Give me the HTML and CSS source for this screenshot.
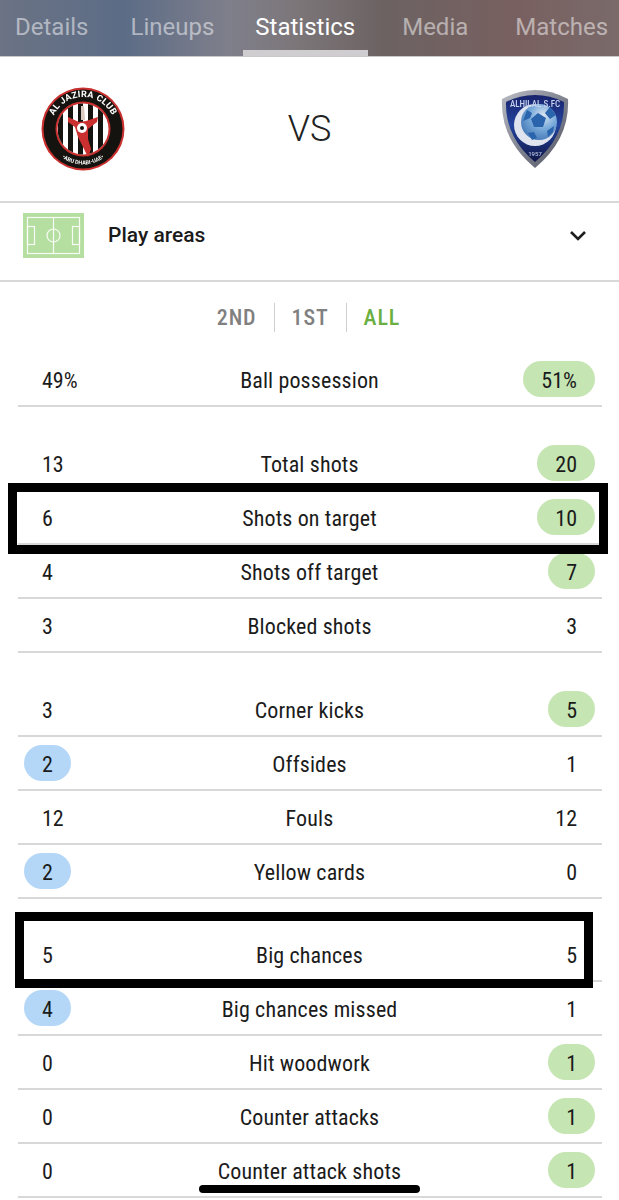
FILE: index.html
```html
<!DOCTYPE html>
<html lang="en">
<head>
<meta charset="utf-8">
<title>Statistics</title>
<link rel="stylesheet" href="styles.css">
</head>
<body>
<div class="page">
  <nav class="tabs">
    <a class="tab tab-details">Details</a>
    <a class="tab tab-lineups">Lineups</a>
    <a class="tab tab-stats active">Statistics</a>
    <a class="tab tab-media">Media</a>
    <a class="tab tab-matches">Matches</a>
  </nav>

  <section class="versus">
    <svg class="crest crest-home" width="84" height="84" viewBox="0 0 84 84">
      <defs>
        <path id="arcTop" d="M10 42a32 32 0 0 1 64 0"/>
        <path id="arcBottom" d="M6.500 42a35.500 35.500 0 0 0 71 0"/>
        <clipPath id="innerClip"><circle cx="42" cy="42" r="25.500"/></clipPath>
      </defs>
      <circle cx="42" cy="42" r="41.500" fill="#c9302f"/>
      <circle cx="42" cy="42" r="39.500" fill="#15130f"/>
      <circle cx="42" cy="42" r="27.500" fill="#c9302f"/>
      <circle cx="42" cy="42" r="25.500" fill="#fff"/>
      <g clip-path="url(#innerClip)" fill="#15130f">
        <rect x="17" y="14" width="5" height="56"/>
        <rect x="27" y="14" width="5" height="56"/>
        <rect x="37" y="14" width="5" height="56"/>
        <rect x="47" y="14" width="5" height="56"/>
        <rect x="57" y="14" width="5" height="56"/>
      </g>
      <path d="M40 19h3l1 14h-4z" fill="#d9c9c0"/>
      <path d="M27 30l11 5 7-1 12-4-1 5-9 7v10l3 10-3 8-4-8-6-12-3-10-7-5z" fill="#c9302f"/>
      <circle cx="41" cy="41" r="5" fill="#fff"/>
      <circle cx="41" cy="41" r="2" fill="#15130f"/>
      <text class="crest-arc" fill="#fff"><textPath href="#arcTop" startOffset="50%" text-anchor="middle">AL JAZIRA CLUB</textPath></text>
      <text class="crest-arc-small" fill="#fff"><textPath href="#arcBottom" startOffset="50%" text-anchor="middle">•ABU DHABI-UAE•</textPath></text>
    </svg>
    <span class="vs">VS</span>
    <svg class="crest crest-away" width="68" height="80" viewBox="0 0 68 80">
      <defs>
        <linearGradient id="rim" x1="0" y1="0" x2="1" y2="1">
          <stop offset="0" stop-color="#b9bcc4"/>
          <stop offset="0.55" stop-color="#7c808c"/>
          <stop offset="1" stop-color="#50535f"/>
        </linearGradient>
        <linearGradient id="field" x1="0" y1="0" x2="0" y2="1">
          <stop offset="0" stop-color="#18236c"/>
          <stop offset="0.45" stop-color="#24449e"/>
          <stop offset="1" stop-color="#0f1648"/>
        </linearGradient>
        <radialGradient id="ball" cx="0.62" cy="0.32" r="0.8">
          <stop offset="0" stop-color="#dbe5f0"/>
          <stop offset="0.45" stop-color="#7aabdb"/>
          <stop offset="1" stop-color="#3a6dae"/>
        </radialGradient>
      </defs>
      <path d="M1 10Q18 1 34 1T67 10Q69 50 34 79Q-1 50 1 10z" fill="url(#rim)"/>
      <path d="M5 13Q19 6 34 6T63 13Q64 48 34 73Q4 48 5 13z" fill="url(#field)"/>
      <circle cx="34" cy="36" r="21" fill="#dfe4ee"/>
      <circle cx="38" cy="33" r="18" fill="url(#ball)"/>
      <path d="M37 24l8 5-3 9h-9l-3-8zM49 18l6 8-6 4-5-6zM26 21l5 3-2 5-7 3zM27 44l6-1 3 6-5 2zM46 42l7-5-1 6-5 5z" fill="#2a64ad"/>
      <text class="crest-hilal" x="34" y="18" text-anchor="middle" fill="#c6d2ee">ALHILAL S.FC</text>
      <text class="crest-year" x="34" y="67" text-anchor="middle" fill="#b9c4de">1957</text>
    </svg>
  </section>

  <section class="play-areas">
    <svg class="pitch" width="61" height="45" viewBox="0 0 61 45">
      <rect width="61" height="45" fill="#b5dfa0"/>
      <g fill="none" stroke="#fff" stroke-opacity=".9" stroke-width="1.200">
        <rect x="4.500" y="4.500" width="52" height="36"/>
        <path d="M30.500 4.500v36"/>
        <circle cx="30.500" cy="22.500" r="6.500"/>
        <rect x="4.500" y="13.500" width="7" height="18"/>
        <rect x="49.500" y="13.500" width="7" height="18"/>
      </g>
    </svg>
    <span class="play-label">Play areas</span>
    <svg class="chevron" width="18" height="12" viewBox="0 0 18 12">
      <path d="M2 2l7 7 7-7" fill="none" stroke="#1d1d1d" stroke-width="2.600"/>
    </svg>
  </section>

  <div class="periods">
    <span class="period">2ND</span>
    <span class="period">1ST</span>
    <span class="period current">ALL</span>
  </div>

  <section class="group">
    <div class="row"><span class="val">49%</span><span class="name">Ball possession</span><span class="val right win-away">51%</span></div>
  </section>
  <section class="group">
    <div class="row"><span class="val">13</span><span class="name">Total shots</span><span class="val right win-away">20</span></div>
    <div class="row"><span class="val">6</span><span class="name">Shots on target</span><span class="val right win-away">10</span></div>
    <div class="row"><span class="val">4</span><span class="name">Shots off target</span><span class="val right win-away">7</span></div>
    <div class="row"><span class="val">3</span><span class="name">Blocked shots</span><span class="val right">3</span></div>
  </section>
  <section class="group">
    <div class="row"><span class="val">3</span><span class="name">Corner kicks</span><span class="val right win-away">5</span></div>
    <div class="row"><span class="val win-home">2</span><span class="name">Offsides</span><span class="val right">1</span></div>
    <div class="row"><span class="val">12</span><span class="name">Fouls</span><span class="val right">12</span></div>
    <div class="row"><span class="val win-home">2</span><span class="name">Yellow cards</span><span class="val right">0</span></div>
  </section>
  <section class="group">
    <div class="row"><span class="val">5</span><span class="name">Big chances</span><span class="val right">5</span></div>
    <div class="row"><span class="val win-home">4</span><span class="name">Big chances missed</span><span class="val right">1</span></div>
    <div class="row"><span class="val">0</span><span class="name">Hit woodwork</span><span class="val right win-away">1</span></div>
    <div class="row"><span class="val">0</span><span class="name">Counter attacks</span><span class="val right win-away">1</span></div>
    <div class="row"><span class="val">0</span><span class="name">Counter attack shots</span><span class="val right win-away">1</span></div>
  </section>

  <div class="mark mark-shots"></div>
  <div class="mark mark-chances"></div>
  <div class="home-indicator"></div>
</div>
</body>
</html>
```
FILE: styles.css
```css
* { box-sizing: border-box; }
html, body { margin: 0; padding: 0; background: #fff; }
body { font-family: Roboto, "Liberation Sans", sans-serif; color: #1b1b1b; }
.page { position: relative; width: 619px; height: 1200px; overflow: hidden; }

.tabs {
  display: flex;
  align-items: stretch;
  height: 57px;
  padding-left: 3px;
  background: linear-gradient(90deg, #6b7384 0%, #5c6c86 20%, #7f7f8b 37%, #7c7679 48%, #6c6262 62%, #796060 84%, #7a6a6a 100%);
  border-bottom: 1px solid #c9c9c9;
}
.tab {
  padding: 0 12px 3px;
  display: flex;
  align-items: center;
  font-size: 24px;
  color: rgba(255, 255, 255, .5);
  white-space: nowrap;
}
.tab.active { color: #fff; padding-right: 13px; box-shadow: inset 0 -6px 0 #cfcdcf; }
.tab-lineups { margin-left: 18px; }
.tab-stats { margin-left: 17px; }
.tab-media { margin-left: 22px; }
.tab-matches { margin-left: 23px; }

.versus {
  height: 146px;
  display: flex;
  align-items: center;
  padding: 0 50px 0 41px;
  justify-content: space-between;
  border-bottom: 2px solid #d8d8d8;
}
.crest { display: block; filter: blur(.4px); }
.crest-arc { font: 700 9px Roboto, sans-serif; letter-spacing: .3px; }
.crest-arc-small { font: 700 5.500px Roboto, sans-serif; }
.crest-hilal { font: 500 9px Roboto, sans-serif; font-stretch: 75%; }
.crest-year { font: 500 6px Roboto, sans-serif; }
.vs { font-size: 36px; font-weight: 300; color: #222; margin-left: -7px; }

.play-areas {
  height: 79px;
  display: flex;
  align-items: center;
  padding: 0 32px 12px 23px;
  border-bottom: 2px solid #d8d8d8;
}
.pitch { display: block; }
.play-label { margin: 0 0 2px 24px; font-size: 21px; font-weight: 500; flex: 1; }
.chevron { display: block; }

.periods {
  height: 71.5px;
  display: flex;
  align-items: center;
  justify-content: center;
  padding-right: 2px;
}
.period {
  padding: 0 17px;
  height: 29px;
  display: flex;
  align-items: center;
  font-size: 22px;
  font-weight: 500;
  font-stretch: 75%;
  letter-spacing: .9px;
  color: #808080;
  border-left: 1px solid #cfcfcf;
}
.period:first-child { border-left: 0; }
.period.current { color: #6aaf3f; }

.group { margin: 0 17px 30px 18px; }
.row {
  height: 53.9px;
  display: grid;
  grid-template-columns: 1fr auto 1fr;
  align-items: center;
  border-bottom: 2px solid #d8d8d8;
  font-size: 22px;
  font-stretch: 75%;
  padding: 0 7px 0 6px;
}
.name { text-align: center; white-space: nowrap; padding-top: 3px; letter-spacing: .13px; }
.val {
  justify-self: start;
  height: 36px;
  line-height: 32px;
  padding: 4px 18px 0;
  border-radius: 18px;
}
.val.right { justify-self: end; }
.win-away { background: #c5e5b3; }
.win-home { background: #b4d7f7; }

.mark { position: absolute; border: 9px solid #000; }
.mark-shots { left: 8px; top: 483px; width: 600px; height: 71px; }
.mark-chances { left: 15px; top: 912px; width: 578px; height: 76px; }
.home-indicator {
  position: absolute;
  left: 199px;
  top: 1185px;
  width: 221px;
  height: 8px;
  border-radius: 4px;
  background: #000;
}
```
